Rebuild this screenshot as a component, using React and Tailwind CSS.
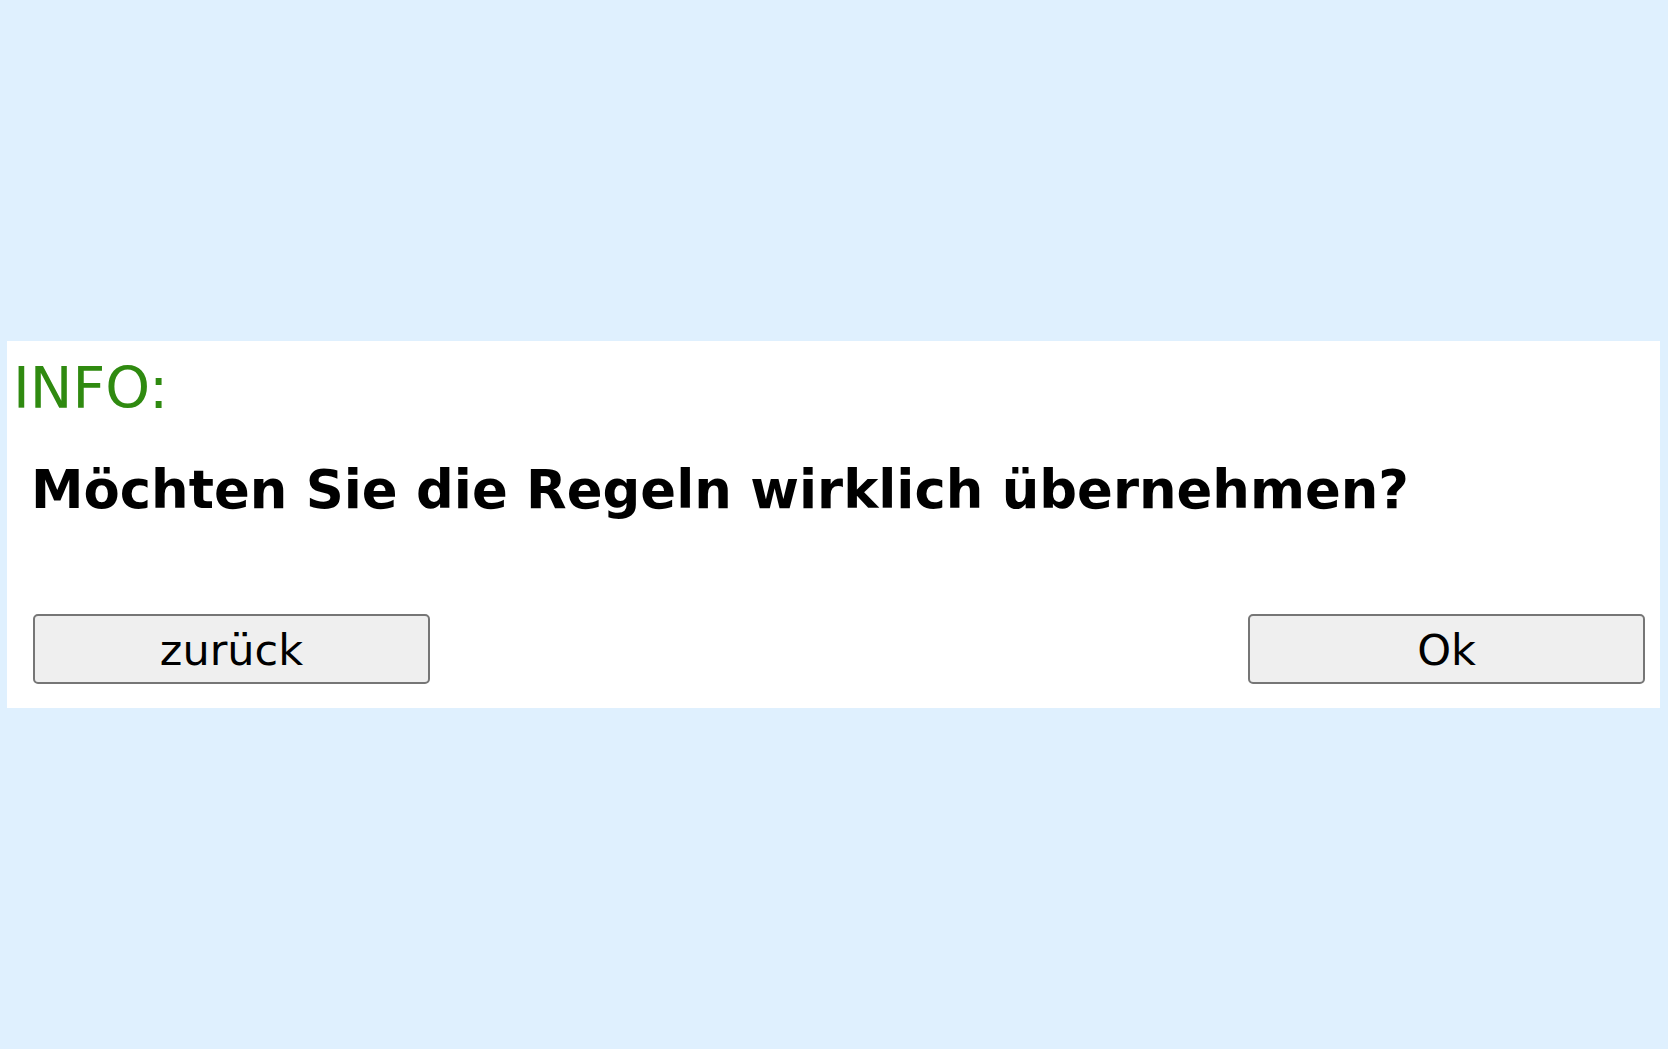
import React from 'react';

const font = { fontFamily: '"DejaVu Sans", Verdana, sans-serif' };

const App = () => {
  return (
    <div className="min-h-screen bg-[#dff0fe] flex items-center" style={font}>
      <div className="ml-[7px] mr-[8px] flex-1 bg-white pt-[15px] pb-[24px]">
        <div className="pl-[6px] text-[57px] leading-[64px] text-[#2f8a10]">INFO:</div>

        <p className="mt-[40px] pl-[24px] text-[52.8px] leading-[60px] font-bold text-black">
          Möchten Sie die Regeln wirklich übernehmen?
        </p>

        <div className="mt-[94px] flex justify-between pl-[26px] pr-[15px]">
          <button className="w-[397px] h-[70px] pt-[3px] bg-[#efefef] border-2 border-[#767676] rounded-[5px] text-[43px] text-black leading-none">
            zurück
          </button>
          <button className="w-[397px] h-[70px] pt-[3px] bg-[#efefef] border-2 border-[#767676] rounded-[5px] text-[43px] text-black leading-none">
            Ok
          </button>
        </div>
      </div>
    </div>
  );
};

export default App;
